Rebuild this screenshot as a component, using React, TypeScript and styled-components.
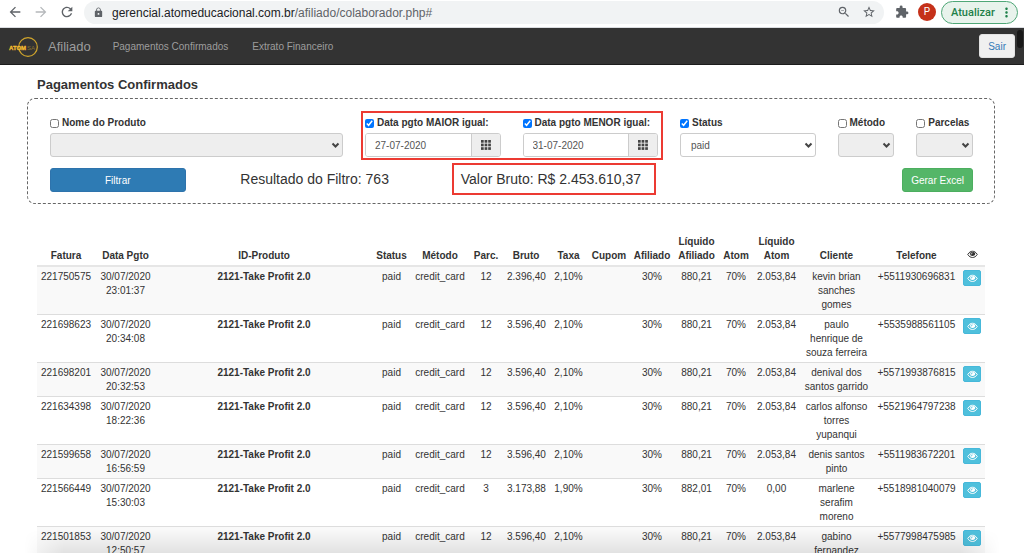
import React from "react";
import styled, { createGlobalStyle } from "styled-components";
import {
  MdArrowBack,
  MdArrowForward,
  MdRefresh,
  MdLock,
  MdZoomOut,
  MdStarBorder,
  MdExtension,
  MdMoreVert,
} from "react-icons/md";

const GlobalStyle = createGlobalStyle`
  *, *::before, *::after { box-sizing: border-box; }
  body {
    margin: 0;
    background: #fff;
    color: #333;
    font: 10px/14px "Liberation Sans", Arial, sans-serif;
    scrollbar-width: none;
  }
  button, input, select { font: inherit; color: inherit; margin: 0; }
`;

const Window = styled.div`
  display: flex;
  flex-direction: column;
  height: 100vh;
  overflow: hidden;
`;

/* Browser bar */

const BrowserBar = styled.header`
  display: flex;
  align-items: center;
  flex: none;
  height: 28px;
  padding: 0 6px 3px 7px;
  border-bottom: 1px solid #dadce0;
  color: #5f6368;
`;

const IconButton = styled.button<{ $dim?: boolean }>`
  display: flex;
  flex: none;
  padding: 0;
  border: 0;
  background: none;
  color: ${(p) => (p.$dim ? "#b5b8bb" : "#5f6368")};
`;

const NavIcons = styled.div`
  display: flex;
  gap: 10px;
  margin-right: 9px;
`;

const AddressBar = styled.div`
  display: flex;
  flex: 1;
  align-items: center;
  gap: 8px;
  height: 23px;
  padding: 0 8px 0 9px;
  border-radius: 12px;
  background: #f1f3f4;
  font-size: 12px;
  line-height: 16px;
`;

const Url = styled.span`
  flex: 1;
  padding-top: 1px;
  white-space: nowrap;
  color: #5f6368;

  b {
    font-weight: 400;
    color: #202124;
  }
`;

const AddressActions = styled.div`
  display: flex;
  gap: 11px;
`;

const BrowserActions = styled.div`
  display: flex;
  align-items: center;
  gap: 9px;
  margin: 0 5px 0 11px;
`;

const Avatar = styled.button`
  width: 18px;
  height: 18px;
  padding: 0;
  border: 0;
  border-radius: 50%;
  background: #c5311a;
  color: #fff;
  font: 10px/18px Roboto, sans-serif;
`;

const UpdateButton = styled.button`
  display: flex;
  align-items: center;
  justify-content: space-between;
  width: 77px;
  height: 23px;
  padding: 1px 3px 0 9px;
  border: 1px solid #4fa777;
  border-radius: 12px;
  background: #e8f3ec;
  color: #1e8049;
  font: 500 11px/16px Roboto, sans-serif;
`;

/* Site */

const Site = styled.div`
  position: relative;
  flex: 1;
  min-height: 0;
`;

const SiteScroll = styled.div`
  height: 100%;
  overflow-y: auto;
  scrollbar-width: none;
`;

const ScrollThumb = styled.div`
  position: absolute;
  top: 2px;
  right: 1px;
  width: 6px;
  height: 18px;
  border-radius: 3px;
  background: #191919;
`;

const BottomShade = styled.div`
  position: absolute;
  right: 24px;
  bottom: 0;
  left: 24px;
  height: 24px;
  background: linear-gradient(rgba(0, 0, 0, 0), rgba(0, 0, 0, 0.09));
  mask-image: linear-gradient(90deg, transparent, #000 40px calc(100% - 40px), transparent);
  pointer-events: none;
`;

const Navbar = styled.nav`
  display: flex;
  align-items: center;
  height: 37px;
  padding: 0 9px 0 8px;
  border-bottom: 1px solid #1c1c1c;
  background: #333;
`;

const Brand = styled.a`
  display: flex;
  align-items: center;
  gap: 9px;
  margin-right: 22px;
  padding-top: 2px;
  color: #9d9d9d;
  font-size: 13px;
  text-decoration: none;
`;

const NavLinks = styled.div`
  display: flex;
  flex: 1;
  gap: 24px;
  padding-top: 2px;
`;

const NavLink = styled.a`
  color: #9d9d9d;
  text-decoration: none;
`;

const Button = styled.button<{ $tone: "light" | "primary" | "success" }>`
  height: 24px;
  padding: 2px 8px 0;
  border: 1px solid
    ${(p) => ({ light: "#e2e2e2", primary: "#2e73ac", success: "#4cae5f" })[p.$tone]};
  border-radius: 3px;
  background: ${(p) => ({ light: "#f0f0f0", primary: "#2e7bb4", success: "#54b668" })[p.$tone]};
  color: ${(p) => (p.$tone === "light" ? "#337ab7" : "#fff")};
`;

const Content = styled.main`
  padding: 12px 29px 0 27px;
`;

const Title = styled.h1`
  margin: 0 0 5px 10px;
  font-size: 13px;
  line-height: 16px;
`;

const Filters = styled.form`
  display: grid;
  grid-template-columns: repeat(12, minmax(0, 1fr));
  gap: 11px 22px;
  padding: 16px 21px 11px 22px;
  border: 1px dashed #666;
  border-radius: 8px;
`;

const Cell = styled.div<{ $span: number }>`
  grid-column: span ${(p) => p.$span};
  min-width: 0;
`;

const DateRange = styled.div`
  position: relative;
  display: grid;
  grid-column: span 4;
  grid-template-columns: repeat(2, minmax(0, 1fr));
  gap: 22px;

  &::after {
    content: "";
    position: absolute;
    inset: -4px -5px -3px -4px;
    border: 2px solid #ec3a32;
    pointer-events: none;
  }
`;

const CheckLabel = styled.label`
  display: flex;
  align-items: center;
  gap: 3px;
  margin-bottom: 3px;
  padding-top: 1px;
  font-weight: 700;
  white-space: nowrap;
`;

const Check = styled.input`
  flex: none;
  width: 9px;
  height: 9px;
`;

const SelectBox = styled.div`
  position: relative;

  svg {
    position: absolute;
    top: 9px;
    right: 3px;
    pointer-events: none;
  }
`;

const Select = styled.select`
  display: block;
  width: 100%;
  height: 24px;
  padding: 2px 10px 0;
  border: 1px solid #ccc;
  border-radius: 3px;
  appearance: none;
  background: #fff;
  color: #555;
  opacity: 1;

  &:disabled {
    background: #eee;
  }
`;

const InputGroup = styled.div`
  display: flex;
  height: 24px;
  border: 1px solid #ccc;
  border-radius: 3px;
  overflow: hidden;
`;

const DateInput = styled.input`
  flex: 1;
  min-width: 0;
  padding: 2px 9px 0;
  border: 0;
  color: #555;
`;

const GridButton = styled.button`
  display: flex;
  align-items: center;
  justify-content: center;
  width: 29px;
  padding: 0;
  border: 0;
  border-left: 1px solid #ccc;
  background: #eee;
`;

const Wide = styled(Button)`
  width: 100%;
`;

const Summary = styled.div`
  grid-column: span 3;
  font-size: 14px;
  line-height: 22px;
  text-align: center;
  white-space: nowrap;
`;

const Marked = styled.span`
  position: relative;

  &::after {
    content: "";
    position: absolute;
    inset: -8px -15px -8px -9px;
    border: 2px solid #ec3a32;
    pointer-events: none;
  }
`;

const Export = styled.div`
  grid-column: span 4;
  text-align: right;
`;

const Table = styled.table`
  width: calc(100% - 20px);
  margin: 31px 10px 0;
  border-spacing: 0;
  table-layout: fixed;
  text-align: center;

  th {
    padding: 0 0 2px;
    border-bottom: 2px solid #e6e6e6;
    vertical-align: bottom;
  }

  td {
    padding: 3px 4px 2px;
    border-top: 1px solid #ddd;
    vertical-align: top;
  }

  td:last-child {
    padding: 3px 3px 0;
  }

  tbody tr:first-child td {
    border-top: 0;
  }

  tbody tr:nth-child(odd) {
    background: #f9f9f9;
  }
`;

const Col = styled.col<{ $w?: number }>`
  width: ${(p) => (p.$w ? `${p.$w}px` : "auto")};
`;

const ViewButton = styled.button`
  display: flex;
  align-items: center;
  justify-content: center;
  width: 18px;
  height: 16px;
  padding: 0;
  border: 1px solid #46b8da;
  border-radius: 2px;
  background: #4fc0dc;
  color: #fff;
`;

const Eye = ({ glint = "#ddd" }: { glint?: string }) => (
  <svg width="11" height="9" viewBox="0 0 22 18" role="img" aria-label="Ver" fill="none">
    <path
      d="M1.500 9C4 4.500 7.500 2.500 11 2.500S18 4.500 20.500 9C18 13 14.500 15 11 15S4 13 1.500 9Z"
      stroke="currentColor"
      strokeWidth="2"
    />
    <path d="M5.500 6.500A5.500 5.500 0 1 0 16.500 6.500C14 3 8 3 5.500 6.500Z" fill="currentColor" />
    <path d="M8 9C8 7 9 6 11 6" stroke={glint} strokeWidth="2" />
  </svg>
);

const Chevron = () => (
  <svg width="9" height="7" viewBox="0 0 9 7" fill="none" aria-hidden="true">
    <path d="M1.500 1.500 4.500 4.500 7.500 1.500" stroke="#444" strokeWidth="2" />
  </svg>
);

const Dots = () => (
  <svg width="10" height="10" viewBox="0 0 10 10" fill="#444" aria-hidden="true">
    {[0, 3.6, 7.2].map((y) =>
      [0, 3.6, 7.2].map((x) => <rect key={`${x}-${y}`} x={x} y={y} width="2.700" height="2.700" />)
    )}
  </svg>
);

const Logo = () => (
  <svg width="31" height="22" viewBox="0 0 31 22" role="img" aria-label="Atom SA">
    <circle cx="20" cy="11" r="9.300" fill="none" stroke="#d0a52c" strokeWidth="1.200" />
    <text x="1" y="13.500" fontSize="6" fontWeight="700" fill="#f7bd2e" stroke="#f7bd2e" strokeWidth="0.300">
      ATOM
    </text>
    <text x="19" y="13.500" fontSize="6" fill="#8b722d">
      SA
    </text>
  </svg>
);

type FieldProps = { id: string; label: string; checked?: boolean };

const FieldLabel = ({ id, label, checked }: FieldProps) => (
  <CheckLabel htmlFor={id}>
    <Check id={id} type="checkbox" defaultChecked={checked} />
    {label}
  </CheckLabel>
);

const SelectField = ({ span, value, ...field }: FieldProps & { span: number; value?: string }) => (
  <Cell $span={span}>
    <FieldLabel {...field} />
    <SelectBox>
      <Select aria-label={field.label} disabled={!value}>
        <option>{value}</option>
      </Select>
      <Chevron />
    </SelectBox>
  </Cell>
);

const DateField = ({ value, ...field }: FieldProps & { value: string }) => (
  <div>
    <FieldLabel {...field} checked />
    <InputGroup>
      <DateInput type="text" aria-label={field.label} defaultValue={value} />
      <GridButton type="button" aria-label="Abrir calendário">
        <Dots />
      </GridButton>
    </InputGroup>
  </div>
);

const columns: [React.ReactNode, number?][] = [
  ["Fatura", 58],
  ["Data Pgto", 61],
  ["ID-Produto"],
  ["Status", 39],
  ["Método", 58],
  ["Parc.", 34],
  ["Bruto", 46],
  ["Taxa", 39],
  ["Cupom", 42],
  ["Afiliado", 44],
  ["Líquido Afiliado", 45],
  ["Atom", 34],
  ["Líquido Atom", 47],
  ["Cliente", 73],
  ["Telefone", 87],
  [<Eye key="eye" />, 25],
];

const rows = [
  ["221750575", "23:01:37", "12", "2.396,40", "2,10%", "880,21", "2.053,84", "kevin brian sanches gomes", "+5511930696831"],
  ["221698623", "20:34:08", "12", "3.596,40", "2,10%", "880,21", "2.053,84", "paulo henrique de souza ferreira", "+5535988561105"],
  ["221698201", "20:32:53", "12", "3.596,40", "2,10%", "880,21", "2.053,84", "denival dos santos garrido", "+5571993876815"],
  ["221634398", "18:22:36", "12", "3.596,40", "2,10%", "880,21", "2.053,84", "carlos alfonso torres yupanqui", "+5521964797238"],
  ["221599658", "16:56:59", "12", "3.596,40", "2,10%", "880,21", "2.053,84", "denis santos pinto", "+5511983672201"],
  ["221566449", "15:30:03", "3", "3.173,88", "1,90%", "882,01", "0,00", "marlene serafim moreno", "+5518981040079"],
  ["221501853", "12:50:57", "12", "3.596,40", "2,10%", "880,21", "2.053,84", "gabino fernandez", "+5577998475985"],
];

export default function App() {
  return (
    <Window>
      <GlobalStyle />
      <BrowserBar>
        <NavIcons>
          <IconButton aria-label="Voltar"><MdArrowBack size={16} /></IconButton>
          <IconButton aria-label="Avançar" $dim><MdArrowForward size={16} /></IconButton>
          <IconButton aria-label="Recarregar"><MdRefresh size={16} /></IconButton>
        </NavIcons>
        <AddressBar>
          <MdLock size={11} />
          <Url>
            <b>gerencial.atomeducacional.com.br</b>/afiliado/colaborador.php#
          </Url>
          <AddressActions>
            <IconButton aria-label="Zoom"><MdZoomOut size={14} /></IconButton>
            <IconButton aria-label="Favoritar"><MdStarBorder size={14} /></IconButton>
          </AddressActions>
        </AddressBar>
        <BrowserActions>
          <IconButton aria-label="Extensões"><MdExtension size={14} /></IconButton>
          <Avatar>P</Avatar>
        </BrowserActions>
        <UpdateButton>
          Atualizar
          <MdMoreVert size={15} />
        </UpdateButton>
      </BrowserBar>

      <Site>
        <SiteScroll>
          <Navbar>
            <Brand href="#">
              <Logo />
              Afiliado
            </Brand>
            <NavLinks>
              <NavLink href="#">Pagamentos Confirmados</NavLink>
              <NavLink href="#">Extrato Financeiro</NavLink>
            </NavLinks>
            <Button $tone="light">Sair</Button>
          </Navbar>

          <Content>
            <Title>Pagamentos Confirmados</Title>
            <Filters onSubmit={(e) => e.preventDefault()}>
              <SelectField span={4} id="produto" label="Nome do Produto" />
              <DateRange>
                <DateField id="maior" label="Data pgto MAIOR igual:" value="27-07-2020" />
                <DateField id="menor" label="Data pgto MENOR igual:" value="31-07-2020" />
              </DateRange>
              <SelectField span={2} id="status" label="Status" value="paid" checked />
              <SelectField span={1} id="metodo" label="Método" />
              <SelectField span={1} id="parcelas" label="Parcelas" />
              <Cell $span={2}>
                <Wide $tone="primary">Filtrar</Wide>
              </Cell>
              <Summary>Resultado do Filtro: 763</Summary>
              <Summary>
                <Marked>Valor Bruto: R$ 2.453.610,37</Marked>
              </Summary>
              <Export>
                <Button $tone="success" type="button">Gerar Excel</Button>
              </Export>
            </Filters>

            <Table>
              <colgroup>
                {columns.map(([, w], i) => (
                  <Col key={i} $w={w} />
                ))}
              </colgroup>
              <thead>
                <tr>
                  {columns.map(([head], i) => (
                    <th key={i} scope="col">{head}</th>
                  ))}
                </tr>
              </thead>
              <tbody>
                {rows.map(([fatura, hora, parc, bruto, taxa, liqAfiliado, liqAtom, cliente, fone]) => (
                  <tr key={fatura}>
                    <td>{fatura}</td>
                    <td>30/07/2020 {hora}</td>
                    <td><b>2121-Take Profit 2.0</b></td>
                    <td>paid</td>
                    <td>credit_card</td>
                    <td>{parc}</td>
                    <td>{bruto}</td>
                    <td>{taxa}</td>
                    <td></td>
                    <td>30%</td>
                    <td>{liqAfiliado}</td>
                    <td>70%</td>
                    <td>{liqAtom}</td>
                    <td>{cliente}</td>
                    <td>{fone}</td>
                    <td>
                      <ViewButton aria-label={`Ver fatura ${fatura}`}><Eye glint="#4fc0dc" /></ViewButton>
                    </td>
                  </tr>
                ))}
              </tbody>
            </Table>
          </Content>
        </SiteScroll>
        <ScrollThumb />
        <BottomShade />
      </Site>
    </Window>
  );
}
